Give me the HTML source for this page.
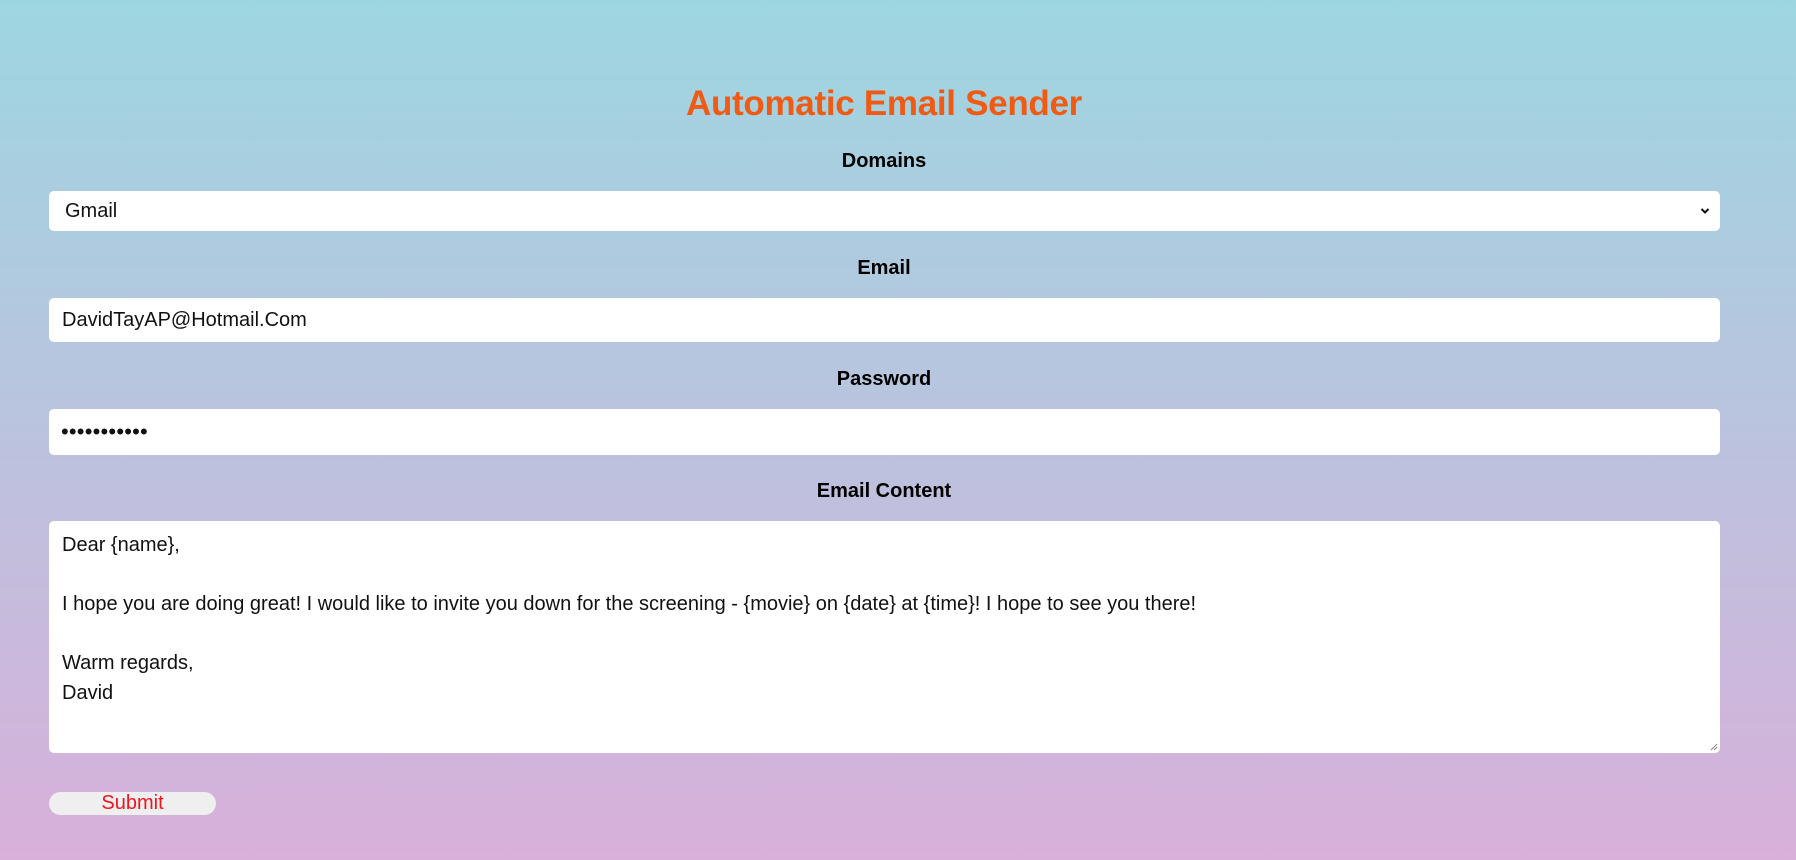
<!DOCTYPE html>
<html><head><meta charset="utf-8"><style>
html,body{margin:0;padding:0;}
body{width:1796px;height:860px;overflow:hidden;background:linear-gradient(#9dd6e1,#d8b0da);font-family:"Liberation Sans",sans-serif;position:relative;}
.a{position:absolute;}
h1{position:absolute;margin:0;left:0;width:1768px;text-align:center;top:84px;font-size:35px;color:#f05a12;font-weight:bold;letter-spacing:-0.3px;}
.lbl{position:absolute;left:0;width:1768px;text-align:center;font-weight:bold;font-size:20px;color:#000;}
.box{position:absolute;left:49px;width:1671px;background:#fff;border-radius:5px;font-size:20px;color:#111;}
</style></head><body>
<h1>Automatic Email Sender</h1>
<div class="lbl" style="top:150px">Domains</div>
<div class="box" style="top:191px;height:40px;line-height:40px;"><span style="margin-left:16px">Gmail</span>
<svg class="a" style="right:10px;top:16px" width="10" height="8" viewBox="0 0 10 8"><path d="M1.5 2 L5 5.5 L8.5 2" stroke="#111" stroke-width="2" fill="none"/></svg></div>
<div class="lbl" style="top:257px">Email</div>
<div class="box" style="top:298px;height:44px;line-height:44px;"><span style="margin-left:13px">DavidTayAP@Hotmail.Com</span></div>
<div class="lbl" style="top:368px">Password</div>
<div class="box" style="top:409px;height:46px;line-height:46px;"><span style="margin-left:12px;font-size:22px;letter-spacing:0.2px">•••••••••••</span></div>
<div class="lbl" style="top:480px">Email Content</div>
<div class="box" style="top:521px;height:232px;line-height:29.5px;"><div style="margin:10px 0 0 13px">Dear {name},<br><br>I hope you are doing great! I would like to invite you down for the screening - {movie} on {date} at {time}! I hope to see you there!<br><br>Warm regards,<br>David</div>
<svg class="a" style="right:2px;bottom:2px" width="8" height="8" viewBox="0 0 8 8"><path d="M7 1 L1 7 M7 4 L4 7" stroke="#888" stroke-width="1"/></svg></div>
<div class="a" style="left:49px;top:792px;width:167px;height:23px;background:#efefef;border-radius:12px;text-align:center;line-height:23px;font-size:20px;color:#f0141e;">Submit</div>
</body></html>
